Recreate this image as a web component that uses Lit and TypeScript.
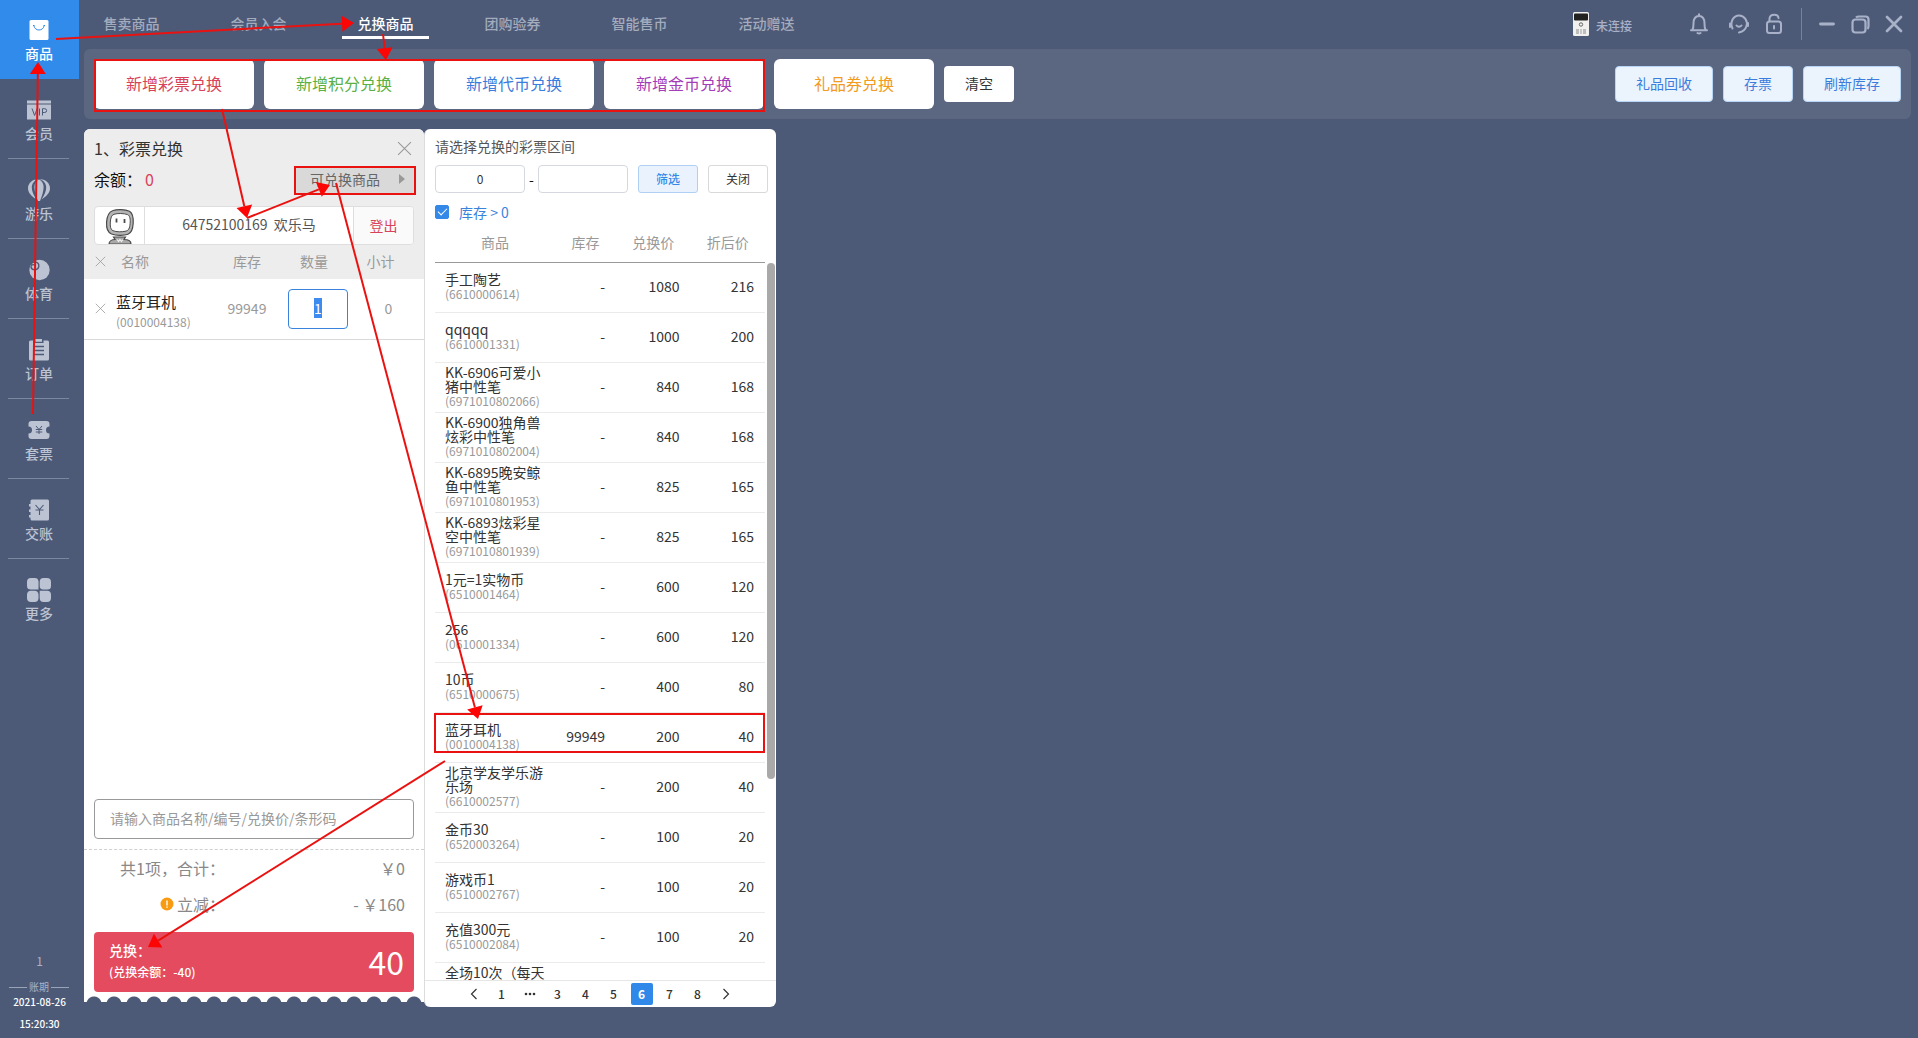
import { LitElement, html, svg, css, nothing } from "lit";
import { customElement, query, state } from "lit/decorators.js";
import { classMap } from "lit/directives/class-map.js";

interface NavItem {
  label: string;
  icon: unknown;
}

interface Product {
  name: string;
  code: string;
  stock: string;
  price: number;
  discounted: number;
}

type Point = [number, number];

const navItems: NavItem[] = [
  {
    label: "商品",
    icon: svg`<rect x="2.5" y="2" width="19" height="20" rx="1.5" fill="currentColor"/>
      <path d="M6 7.500h1.500M16.500 7.500H18M6.800 7.500c1 6 9.400 6 10.400 0" fill="none" stroke="#318bea" stroke-width="1"/>`,
  },
  {
    label: "会员",
    icon: svg`<rect x="0" y="2.500" width="24" height="3" fill="currentColor"/>
      <rect x="0" y="6.500" width="24" height="15" fill="currentColor"/>
      <path d="M5 10.500l2.600 7 2.600-7M12.500 10.500v7M15.500 17.500v-6.800h2.200a1.900 1.900 0 0 1 0 3.800h-2.200" fill="none" stroke="#4c5a78" stroke-width="1"/>`,
  },
  {
    label: "游乐",
    icon: svg`<path d="M12 1C5.500 1 1 5.200 1 10.200c0 4.500 3.500 8 8.500 11.300C6.500 17 4.800 13 4.800 9.500 4.800 5.500 7.500 2 12 1z" fill="currentColor"/>
      <path d="M12 1c6.500 0 11 4.200 11 9.200 0 4.500-3.500 8-8.500 11.300 3-4.500 4.700-8.500 4.700-12C19.200 5.500 16.500 2 12 1z" fill="currentColor"/>
      <path d="M12 1.500c-3.300 1.500-4.600 4.300-4.600 7.800 0 4 1.600 8.500 3.600 13.700h2c2-5.200 3.600-9.700 3.600-13.700C16.600 5.800 15.300 3 12 1.500z" fill="currentColor"/>`,
  },
  {
    label: "体育",
    icon: svg`<circle cx="12.500" cy="12" r="10.200" fill="currentColor"/>
      <path d="M3.500 6.500c3-4.500 8.800-2.500 8.300 2-.5 4-6.800 4.500-7.800.5-.3-2 2.500-3.300 3.800-1.500" fill="none" stroke="#4c5a78" stroke-width="1.400"/>`,
  },
  {
    label: "订单",
    icon: svg`<path d="M3.500 2.500H7V5h9.500V2.500h4a1.500 1.500 0 0 1 1.500 1.500v17a1.500 1.500 0 0 1-1.500 1.500h-17A1.500 1.500 0 0 1 2 21V4a1.500 1.500 0 0 1 1.500-1.500z" fill="currentColor"/>
      <path d="M8.500 1h6.500v2.800H8.500z" fill="currentColor"/>
      <path d="M7 8.500h10M7 12.500h10M7 16.500h10" stroke="#4c5a78" stroke-width="1.300"/>`,
  },
  {
    label: "套票",
    icon: svg`<path d="M4 3h15.500a3 3 0 0 1 3 3v2.500a3.500 3.500 0 0 0 0 7V18a3 3 0 0 1-3 3H4.500a3 3 0 0 1-3-3v-2.500a3.500 3.500 0 0 0 0-7V6a3 3 0 0 1 3-3z" fill="currentColor"/>
      <path d="M9 8l3 3.500L15 8M12 11.500V16M8.800 11.500h6.400M8.800 14h6.400" fill="none" stroke="#4c5a78" stroke-width="1"/>`,
  },
  {
    label: "交账",
    icon: svg`<path d="M5 1.500h15.500A1.500 1.500 0 0 1 22 3v18a1.500 1.500 0 0 1-1.500 1.500H5A1.500 1.500 0 0 1 3.500 21v-1.500H2V17h1.500v-3H2v-2.500h1.500V8.500H2V6h1.500V3A1.500 1.500 0 0 1 5 1.500z" fill="currentColor"/>
      <path d="M8.500 7l4 4.500L16.500 7M12.500 11.500V17M8.500 12h8" fill="none" stroke="#4c5a78" stroke-width="1.100"/>`,
  },
  {
    label: "更多",
    icon: svg`<path d="M4 0h4a4 4 0 0 1 4 3.500V12H4a4 4 0 0 1-4-4V4a4 4 0 0 1 4-4z" fill="currentColor" transform="scale(.96)"/>
      <path d="M16.500 0H20a4 4 0 0 1 4 4v4a3.500 3.500 0 0 1-3.500 3.500H16A3.500 3.500 0 0 1 12.700 8V4A4 4 0 0 1 16.500 0z" fill="currentColor"/>
      <path d="M4 12.700h3.500A4 4 0 0 1 11.500 16.500V20a4 4 0 0 1-4 4H4a4 4 0 0 1-4-4v-3.500a4 4 0 0 1 4-3.800z" fill="currentColor"/>
      <path d="M12.700 12.700H20a4 4 0 0 1 4 4V20a4 4 0 0 1-4 4h-3.500a4 4 0 0 1-3.800-4z" fill="currentColor"/>`,
  },
];

const tabs = ["售卖商品", "会员入会", "兑换商品", "团购验券", "智能售币", "活动赠送"];

const exchangeKinds = [
  { label: "新增彩票兑换", tone: "red" },
  { label: "新增积分兑换", tone: "green" },
  { label: "新增代币兑换", tone: "blue" },
  { label: "新增金币兑换", tone: "purple" },
  { label: "礼品券兑换", tone: "orange" },
];

const products: Product[] = [
  { name: "手工陶艺", code: "6610000614", stock: "-", price: 1080, discounted: 216 },
  { name: "qqqqq", code: "6610001331", stock: "-", price: 1000, discounted: 200 },
  { name: "KK-6906可爱小猪中性笔", code: "6971010802066", stock: "-", price: 840, discounted: 168 },
  { name: "KK-6900独角兽炫彩中性笔", code: "6971010802004", stock: "-", price: 840, discounted: 168 },
  { name: "KK-6895晚安鲸鱼中性笔", code: "6971010801953", stock: "-", price: 825, discounted: 165 },
  { name: "KK-6893炫彩星空中性笔", code: "6971010801939", stock: "-", price: 825, discounted: 165 },
  { name: "1元=1实物币", code: "6510001464", stock: "-", price: 600, discounted: 120 },
  { name: "256", code: "0610001334", stock: "-", price: 600, discounted: 120 },
  { name: "10币", code: "6510000675", stock: "-", price: 400, discounted: 80 },
  { name: "蓝牙耳机", code: "0010004138", stock: "99949", price: 200, discounted: 40 },
  { name: "北京学友学乐游乐场", code: "6610002577", stock: "-", price: 200, discounted: 40 },
  { name: "金币30", code: "6520003264", stock: "-", price: 100, discounted: 20 },
  { name: "游戏币1", code: "6510002767", stock: "-", price: 100, discounted: 20 },
  { name: "充值300元", code: "6510002084", stock: "-", price: 100, discounted: 20 },
];

const arrows: [Point, Point][] = [
  [[33, 414], [38, 62]],
  [[56, 39], [354, 23]],
  [[383, 34], [386, 60]],
  [[222, 109], [247, 218]],
  [[247, 218], [330, 185]],
  [[336, 183], [478, 719]],
  [[445, 761], [148, 947]],
];

const frames = [
  { x: 95, y: 60, w: 669, h: 51 },
  { x: 295, y: 167, w: 120, h: 27 },
  { x: 435, y: 714, w: 329, h: 38 },
];

/** Tutorial overlay: outlines and arrows that walk through the exchange flow. */
@customElement("guide-overlay")
export class GuideOverlay extends LitElement {
  static styles = css`
    :host {
      position: absolute;
      inset: 0;
      overflow: hidden;
      pointer-events: none;
    }
    .canvas {
      display: block;
      width: 100%;
      height: 100%;
    }
    .frame,
    .shaft {
      fill: none;
      stroke: #ea1210;
      stroke-width: 2;
    }
    .head {
      fill: #fb0505;
    }
  `;

  private arrow([[x1, y1], [x2, y2]]: [Point, Point]) {
    const length = Math.hypot(x2 - x1, y2 - y1);
    const ux = (x2 - x1) / length;
    const uy = (y2 - y1) / length;
    const bx = x2 - ux * 12;
    const by = y2 - uy * 12;
    const points = `${x2},${y2} ${bx - uy * 8},${by + ux * 8} ${bx + uy * 8},${by - ux * 8}`;
    return svg`<line class="shaft" x1=${x1} y1=${y1} x2=${bx} y2=${by}/><polygon class="head" points=${points}/>`;
  }

  render() {
    return html`<svg class="canvas" aria-hidden="true">
      ${frames.map((f) => svg`<rect class="frame" x=${f.x} y=${f.y} width=${f.w} height=${f.h}/>`)}
      ${arrows.map((a) => this.arrow(a))}
    </svg>`;
  }
}

@customElement("app-root")
export class AppRoot extends LitElement {
  static styles = css`
    :host {
      display: block;
      position: relative;
      font-family: "Noto Sans CJK SC", "Noto Sans", sans-serif;
      font-size: 14px;
      color: #333;
      background: #4c5a78;
    }
    * {
      box-sizing: border-box;
    }
    button,
    input {
      font: inherit;
      color: inherit;
      margin: 0;
      padding: 0 0 2px;
      border: 0;
      background: none;
      outline: none;
    }
    ul {
      list-style: none;
      margin: 0;
      padding: 0;
    }
    svg {
      display: block;
      flex: none;
    }

    .app {
      display: flex;
      height: 100vh;
      min-height: 700px;
    }

    /* sidebar */
    .sidebar {
      display: flex;
      flex-direction: column;
      justify-content: space-between;
      flex: none;
      width: 79px;
    }
    .nav-item {
      display: flex;
      flex-direction: column;
      height: 80px;
    }
    .nav-item::after {
      content: "";
      height: 1px;
      margin: 0 10px 1px 8px;
      background: #7c88a0;
    }
    .nav-item.active::after,
    .nav-item:last-child::after {
      background: none;
      margin-bottom: 0;
    }
    .nav-button {
      display: flex;
      flex-direction: column;
      align-items: center;
      gap: 1px;
      flex: 1;
      padding: 18px 1px 0 0;
      font-weight: 500;
      line-height: 20px;
      color: #bcc3d2;
    }
    .active .nav-button {
      background: #318bea;
      color: #fff;
    }
    .shift {
      display: flex;
      flex-direction: column;
      align-items: stretch;
      padding-bottom: 6px;
      text-align: center;
      font-size: 10px;
      line-height: 16px;
    }
    .shift-number {
      margin-bottom: 10px;
      font-size: 12px;
      line-height: 18px;
      color: #aab3c5;
    }
    .shift-label {
      display: flex;
      align-items: center;
      gap: 2px;
      padding: 0 10px 0 9px;
      line-height: 14px;
      color: #aab3c5;
    }
    .shift-label::before,
    .shift-label::after {
      content: "";
      flex: 1;
      height: 1px;
      background: #9aa4b8;
    }
    .clock {
      color: #fff;
      font-weight: 500;
    }
    .clock + .clock {
      margin-top: 6px;
    }

    /* main column */
    .main {
      display: flex;
      flex-direction: column;
      flex: 1;
      min-width: 0;
      padding: 0 7px 31px 5px;
    }
    .topbar {
      display: flex;
      justify-content: space-between;
      height: 49px;
      flex: none;
      padding: 0 8px 0 4px;
    }
    .tabs {
      display: flex;
      gap: 40px;
      height: 39px;
    }
    .tab {
      width: 87px;
      padding-top: 7px;
      border-bottom: 3px solid transparent;
      color: #a3abbd;
      font-weight: 500;
      text-align: center;
      text-decoration: none;
      line-height: 32px;
    }
    .tab.active {
      color: #fff;
      border-color: #fff;
    }
    .status {
      display: flex;
      align-items: center;
      height: 48px;
      color: #a9b1c8;
    }
    .device {
      display: flex;
      align-items: center;
      gap: 7px;
      margin-right: 57px;
      font-size: 12px;
      font-weight: 500;
    }
    .device-state {
      padding-top: 3px;
    }
    .tools {
      display: flex;
      align-items: center;
      gap: 16px;
    }
    .tools.window {
      gap: 15px;
      height: 32px;
      margin-left: 18px;
      padding-left: 16px;
      border-left: 1px solid #78839b;
    }
    .icon-button {
      display: block;
      padding: 0;
      line-height: 0;
    }

    .toolbar {
      display: flex;
      align-items: center;
      gap: 10px;
      flex: none;
      height: 70px;
      padding: 0 10px;
      border-radius: 6px;
      background: #5b6780;
    }
    .kind {
      width: 160px;
      height: 50px;
      border-radius: 6px;
      background: #fff;
      font-size: 16px;
    }
    .red { color: #d8435a; }
    .green { color: #5cb043; }
    .blue { color: #3b7ddc; }
    .purple { color: #a53cb8; }
    .orange { color: #f29b1d; }
    .clear {
      width: 70px;
      height: 36px;
      border-radius: 4px;
      background: #fff;
    }
    .spacer {
      flex: 1;
    }
    .secondary {
      height: 36px;
      padding: 0 20px 2px;
      border: 1px solid #b9d5f6;
      border-radius: 4px;
      background: #ebf3fd;
      color: #3b7ddc;
    }

    .workspace {
      display: flex;
      flex: 1;
      min-height: 0;
      padding-top: 10px;
    }

    /* cart */
    .cart {
      display: flex;
      flex-direction: column;
      flex: none;
      width: 340px;
      margin-bottom: 5px;
      border-radius: 6px 6px 0 0;
      background: #fff;
    }
    .cart-head {
      flex: none;
      border-radius: 6px 6px 0 0;
      background: #ededed;
    }
    .title-row,
    .balance-row {
      display: flex;
      align-items: center;
      justify-content: space-between;
      font-size: 16px;
    }
    .title-row {
      height: 38px;
      padding: 0 12px 0 10px;
    }
    .title {
      margin: 0;
      font-size: 16px;
      font-weight: 400;
    }
    .balance-row {
      height: 26px;
      padding: 0 8px 0 10px;
      color: #111;
    }
    .balance-text {
      padding-bottom: 2px;
    }
    .balance {
      margin-left: 3px;
      color: #d8435a;
    }
    .available {
      display: flex;
      align-items: center;
      justify-content: space-between;
      width: 122px;
      height: 28px;
      padding: 0 11px 2px 16px;
      background: #d9d9d9;
      font-size: 14px;
      color: #666;
    }
    .member {
      display: flex;
      height: 39px;
      margin: 13px 10px 0;
      border: 1px solid #dedede;
      border-radius: 4px;
      background: #fff;
      overflow: hidden;
    }
    .avatar {
      display: flex;
      align-items: flex-end;
      justify-content: center;
      width: 50px;
      border-right: 1px solid #dedede;
    }
    .member-name {
      flex: 1;
      text-align: center;
      line-height: 35px;
      color: #555;
      white-space: pre;
    }
    .logout {
      width: 60px;
      border-left: 1px solid #dedede;
      background: #fafafa;
      color: #d8435a;
    }
    .cart-table,
    .product-table {
      width: 100%;
      table-layout: fixed;
      border-spacing: 0;
    }
    .cart-table th,
    .cart-table td {
      padding: 0 0 2px;
      text-align: center;
      font-weight: 400;
      color: #999;
    }
    .cart-table th {
      height: 34px;
      background: #ededed;
    }
    .cart-table td {
      height: 61px;
      border-bottom: 1px solid #d9d9d9;
    }
    .cart-table td.col-name {
      padding: 6px 0 0;
      text-align: left;
    }
    .cart-table th.col-name {
      padding-left: 5px;
      text-align: left;
    }
    .cart-table th.col-qty {
      padding-right: 8px;
    }
    .cart-table td.col-qty {
      padding: 0;
    }
    .cart-table th.col-sum {
      padding-right: 20px;
    }
    .cart-table td.col-sum {
      padding-right: 4px;
    }
    .c-remove { width: 32px; }
    .c-name { width: 99px; }
    .c-stock { width: 64px; }
    .c-qty { width: 78px; }
    .remove {
      padding: 4px 0 4px 11px;
      display: block;
    }
    .item-name {
      color: #222;
      font-size: 15px;
      line-height: 20px;
    }
    .item-code {
      font-size: 12px;
      line-height: 20px;
      color: #999;
    }
    .qty {
      width: 60px;
      height: 40px;
      border: 1px solid #3a83dc;
      border-radius: 4px;
      text-align: center;
      color: #333;
      line-height: 14px;
      vertical-align: middle;
    }
    .qty::selection {
      background: #3d8bee;
      color: #fff;
    }
    .cart-space {
      flex: 1;
    }
    .search {
      flex: none;
      height: 40px;
      margin: 0 10px 10px;
      padding: 0 15px 2px;
      border: 1px solid #999;
      border-radius: 4px;
    }
    .search::placeholder {
      color: #999;
      opacity: 1;
    }
    .totals {
      padding: 0 19px 10px 0;
      border-top: 1px dashed #d0d0d0;
      font-size: 16px;
      line-height: 36px;
      color: #888;
    }
    .total {
      display: flex;
      justify-content: space-between;
    }
    .total-label {
      display: flex;
      align-items: center;
      justify-content: flex-end;
      gap: 3px;
      width: 141px;
    }
    .submit {
      display: flex;
      align-items: center;
      justify-content: space-between;
      flex: none;
      height: 60px;
      margin: 0 10px;
      padding: 0 10px 2px 15px;
      border-radius: 4px;
      background: #e44b5e;
      color: #fff;
      font-weight: 500;
      text-align: left;
    }
    .submit-title {
      display: block;
      line-height: 22px;
    }
    .submit-note {
      display: block;
      font-size: 12px;
      line-height: 22px;
    }
    .submit-amount {
      font-size: 32px;
      font-weight: 400;
    }
    .scallop {
      flex: none;
      height: 10px;
      background: radial-gradient(circle at 10px 12px, #4c5a78 7px, transparent 8px) 0 0 / 20px 10px;
    }

    /* product picker */
    .picker {
      display: flex;
      flex-direction: column;
      flex: none;
      width: 352px;
      border-left: 1px solid #dcdcdc;
      border-radius: 6px;
      background: #fff;
    }
    .picker-title {
      margin: 0;
      padding: 0 10px 2px;
      font-size: 14px;
      font-weight: 400;
      line-height: 34px;
      color: #555;
    }
    .range {
      display: flex;
      align-items: center;
      justify-content: space-between;
      padding: 0 8px 0 10px;
      font-size: 12px;
    }
    .range-inputs {
      display: flex;
      align-items: center;
      gap: 4px;
    }
    .range-input {
      width: 90px;
      height: 28px;
      border: 1px solid #d5d8de;
      border-radius: 4px;
      text-align: center;
    }
    .dash {
      font-size: 14px;
      color: #111;
    }
    .small {
      width: 60px;
      height: 28px;
      border: 1px solid #d9d9d9;
      border-radius: 3px;
    }
    .small.primary {
      border-color: #b0d0f3;
      background: #eaf3fd;
      color: #3488e8;
      font-weight: 500;
    }
    .stock-filter {
      display: flex;
      align-items: center;
      gap: 10px;
      height: 22px;
      margin: 8px 10px 0;
      color: #3a83dc;
    }
    .check {
      appearance: none;
      display: grid;
      place-items: center;
      width: 14px;
      height: 14px;
      padding: 0;
      border: 1px solid #3488e8;
      border-radius: 2px;
    }
    .check:checked {
      background: #3488e8;
    }
    .check:checked::after {
      content: "";
      width: 8px;
      height: 4px;
      margin-bottom: 3px;
      border: solid #fff;
      border-width: 0 0 1px 1px;
      transform: rotate(-45deg);
    }
    .list {
      display: flex;
      flex: 1;
      min-height: 0;
      padding: 0 1px 0 10px;
      border-bottom: 1px solid #e6e6e6;
    }
    .list-body {
      flex: 1;
      overflow: hidden;
    }
    .track {
      width: 8px;
      margin: 40px 0 0 2px;
    }
    .thumb {
      border-radius: 4px;
      background: #a9a9a9;
    }
    .product-table th {
      height: 40px;
      padding: 0 0 2px;
      border-bottom: 1px solid #999;
      font-weight: 400;
      color: #999;
    }
    .product-table td {
      height: 50px;
      padding: 0 11px 3px 0;
      border-bottom: 1px solid #ebebeb;
      text-align: right;
    }
    .product-table .p-name {
      padding: 0 10px 2px;
      text-align: left;
      line-height: 14px;
      word-break: break-all;
    }
    .product-table .p-partial {
      padding-top: 2px;
      vertical-align: top;
    }
    .p-code {
      display: block;
      font-size: 12px;
      line-height: 15px;
      color: #999;
    }
    .w-name { width: 120px; }
    .w-stock { width: 61px; }
    .pager {
      display: flex;
      align-items: center;
      justify-content: center;
      gap: 6px;
      flex: none;
      height: 26px;
      padding-right: 2px;
      font-size: 12px;
      font-weight: 500;
    }
    .page {
      display: grid;
      place-items: center;
      width: 22px;
      height: 22px;
      padding: 0;
      border-radius: 2px;
      line-height: 22px;
    }
    .page.current {
      background: #3088e8;
      color: #fff;
      font-weight: 700;
    }
  `;

  @state() private activeTab = 2;
  @state() private page = 6;
  @query(".qty") private qty!: HTMLInputElement;

  firstUpdated() {
    this.qty.focus();
    this.qty.select();
  }

  private cross(size: number, color: string, width = 1) {
    return html`<svg width=${size} height=${size} viewBox="0 0 14 14" fill="none" stroke=${color} stroke-width=${width}>
      <path d="M1 1l12 12M13 1L1 13" />
    </svg>`;
  }

  private renderSidebar() {
    return html`<aside class="sidebar">
      <ul>
        ${navItems.map(
          (item, i) => html`<li class=${classMap({ "nav-item": true, active: i === 0 })}>
            <button class="nav-button" type="button">
              <svg width="24" height="24" viewBox="0 0 24 24">${item.icon}</svg>
              ${item.label}
            </button>
          </li>`
        )}
      </ul>
      <div class="shift">
        <div class="shift-number">1</div>
        <div class="shift-label">账期</div>
        <time class="clock">2021-08-26</time>
        <time class="clock">15:20:30</time>
      </div>
    </aside>`;
  }

  private renderTopbar() {
    return html`<header class="topbar">
      <nav class="tabs">
        ${tabs.map(
          (label, i) => html`<a
            href="#"
            class=${classMap({ tab: true, active: i === this.activeTab })}
            @click=${(e: Event) => {
              e.preventDefault();
              this.activeTab = i;
            }}
            >${label}</a
          >`
        )}
      </nav>
      <div class="status">
        <div class="device">
          <svg width="16" height="24" viewBox="0 0 16 24">
            <rect width="16" height="24" rx="1.500" fill="#f1f1ef" />
            <rect x="1" y="1.500" width="14" height="7" rx="1" fill="#222" />
            <circle cx="8" cy="12.500" r="1.700" fill="none" stroke="#666" />
            <rect x="3" y="17" width="3" height="5" fill="#bdbdbd" />
            <rect x="7" y="17" width="2" height="5" fill="#c9c9c9" />
            <rect x="10" y="17" width="3" height="5" fill="#bdbdbd" />
          </svg>
          <span class="device-state">未连接</span>
        </div>
        <div class="tools">
          <button class="icon-button" type="button" aria-label="通知">
            <svg width="20" height="22" viewBox="0 0 20 22" fill="none" stroke="currentColor" stroke-width="2" stroke-linejoin="round" stroke-linecap="round">
              <path d="M10 1.300v1.300M2 17.300h16M3.500 16.500c1-1.500 1-3 1-6 0-4.500 2-7.500 5.500-7.500s5.500 3 5.500 7.500c0 3 0 4.500 1 6M8.500 20c.8.600 2.200.6 3 0" />
            </svg>
          </button>
          <button class="icon-button" type="button" aria-label="客服">
            <svg width="24" height="22" viewBox="-3 0 24 22" fill="none" stroke="currentColor" stroke-width="2" stroke-linecap="round">
              <path d="M4.500 15.500C1.500 9 5.500 2.500 11 2.500S20 8 18.500 13c-1 3.500-3 5.500-7.500 6.500M2 10.500v3.500M20 10v3M8.500 12.500c1.200 1.500 3.800 1.500 5 0" />
            </svg>
          </button>
          <button class="icon-button" type="button" aria-label="锁屏">
            <svg width="18" height="22" viewBox="0 0 18 22" fill="none" stroke="currentColor" stroke-width="2" stroke-linecap="round">
              <rect x="2" y="8.500" width="14" height="11.500" rx="2.500" />
              <path d="M4.500 8V5.500C5 .5 13 .5 13.500 5M9 13v2.500" />
            </svg>
          </button>
        </div>
        <div class="tools window">
          <button class="icon-button" type="button" aria-label="最小化">
            <svg width="18" height="18" viewBox="0 0 18 18" stroke="currentColor" stroke-width="2.800" stroke-linecap="round">
              <path d="M2.500 9h13" />
            </svg>
          </button>
          <button class="icon-button" type="button" aria-label="还原">
            <svg width="19" height="19" viewBox="0 0 19 19" fill="none" stroke="currentColor" stroke-width="2.200">
              <rect x="1.500" y="4.500" width="13" height="13" rx="3" />
              <path d="M5 2.500C6 1.500 7 1.500 8 1.500h6.500a3 3 0 0 1 3 3V11c0 1 0 2-1 3" />
            </svg>
          </button>
          <button class="icon-button" type="button" aria-label="关闭">
            <svg width="18" height="18" viewBox="0 0 18 18" stroke="currentColor" stroke-width="2.700" stroke-linecap="round">
              <path d="M2 2l14 14M16 2L2 16" />
            </svg>
          </button>
        </div>
      </div>
    </header>`;
  }

  private renderToolbar() {
    return html`<div class="toolbar">
      ${exchangeKinds.map((k) => html`<button type="button" class="kind ${k.tone}">${k.label}</button>`)}
      <button type="button" class="clear">清空</button>
      <span class="spacer"></span>
      ${["礼品回收", "存票", "刷新库存"].map(
        (label) => html`<button type="button" class="secondary">${label}</button>`
      )}
    </div>`;
  }

  private renderCart() {
    return html`<section class="cart">
      <div class="cart-head">
        <div class="title-row">
          <h2 class="title">1、彩票兑换</h2>
          <button class="icon-button" type="button" aria-label="关闭">${this.cross(15, "#999")}</button>
        </div>
        <div class="balance-row">
          <span class="balance-text">余额：<span class="balance">0</span></span>
          <button class="available" type="button">
            可兑换商品
            <svg width="6" height="10" viewBox="0 0 6 10"><path d="M0 0l6 5-6 5z" fill="#999" /></svg>
          </button>
        </div>
        <div class="member">
          <div class="avatar">
            <svg width="30" height="36" viewBox="0 0 30 36" stroke="#4a4a4a" stroke-width="1.200">
              <path d="M4 36c0-3 3-4.500 6-4.500l-1.500-2.500h12L19 31.500c4 0 7 1.500 7 4.500z" fill="#a9a9a9" />
              <path d="M7.500 2.800C12 1 20 1.200 24.500 3.300c3.200 2 4 6.500 3.700 12-.4 6.500-2 9.800-5.200 11-4 1.400-12 1.400-16.500-.3C2.500 24.300 1.200 20 1.600 14c.5-6 2.400-9.900 5.900-11.200z" fill="#b4b4b4" />
              <path d="M9 6.300c3.500-1.200 10-1 13.500.3 2.500 1 3 4.500 2.600 9-.4 5-1.600 6.800-4.100 7.500-4 1-9.500 1-13-.4-2.500-1-3-4.500-2.700-8.700.4-4.200 1.200-7 3.700-7.700z" fill="#fff" stroke-width="1" />
              <path d="M11.500 10.500v4M19.500 11v4" stroke-width="1.800" />
              <path d="M12 31.500l1.500 2 1.500-2 1.500 2 1.500-2" fill="none" stroke="#eee" />
            </svg>
          </div>
          <div class="member-name">64752100169  欢乐马</div>
          <button class="logout" type="button">登出</button>
        </div>
      </div>
      <table class="cart-table">
        <colgroup>
          <col class="c-remove" />
          <col class="c-name" />
          <col class="c-stock" />
          <col class="c-qty" />
          <col />
        </colgroup>
        <thead>
          <tr>
            <th><button class="remove" type="button" aria-label="全部移除">${this.cross(11, "#999")}</button></th>
            <th class="col-name">名称</th>
            <th>库存</th>
            <th class="col-qty">数量</th>
            <th class="col-sum">小计</th>
          </tr>
        </thead>
        <tbody>
          <tr>
            <td><button class="remove" type="button" aria-label="移除">${this.cross(11, "#999")}</button></td>
            <td class="col-name">
              <div class="item-name">蓝牙耳机</div>
              <div class="item-code">(0010004138)</div>
            </td>
            <td>99949</td>
            <td class="col-qty"><input class="qty" type="text" aria-label="数量" .value=${"1"} /></td>
            <td class="col-sum">0</td>
          </tr>
        </tbody>
      </table>
      <div class="cart-space"></div>
      <input class="search" type="text" aria-label="搜索商品" placeholder="请输入商品名称/编号/兑换价/条形码" />
      <div class="totals">
        <div class="total"><span class="total-label">共1项，合计：</span><span>￥0</span></div>
        <div class="total">
          <span class="total-label">
            <svg width="14" height="14" viewBox="0 0 14 14">
              <circle cx="7" cy="7" r="6.500" fill="#f79c12" />
              <path d="M7 3.500v5M7 9.500v1.300" stroke="#ffe9c4" stroke-width="1.800" />
            </svg>
            立减：
          </span>
          <span>- ￥160</span>
        </div>
      </div>
      <button class="submit" type="button">
        <span>
          <span class="submit-title">兑换：</span>
          <span class="submit-note">(兑换余额：-40)</span>
        </span>
        <span class="submit-amount">40</span>
      </button>
      <div class="scallop"></div>
    </section>`;
  }

  private renderRow(p: Product) {
    return html`<tr>
      <td class="p-name">${p.name}<span class="p-code">(${p.code})</span></td>
      <td>${p.stock}</td>
      <td>${p.price}</td>
      <td>${p.discounted}</td>
    </tr>`;
  }

  private renderPicker() {
    return html`<section class="picker">
      <h2 class="picker-title">请选择兑换的彩票区间</h2>
      <div class="range">
        <div class="range-inputs">
          <input class="range-input" type="text" aria-label="最低价" .value=${"0"} />
          <span class="dash">-</span>
          <input class="range-input" type="text" aria-label="最高价" />
        </div>
        <button class="small primary" type="button">筛选</button>
        <button class="small" type="button">关闭</button>
      </div>
      <label class="stock-filter"><input class="check" type="checkbox" checked />库存 > 0</label>
      <div class="list">
        <div class="list-body">
          <table class="product-table">
            <colgroup>
              <col class="w-name" />
              <col class="w-stock" />
              <col />
              <col />
            </colgroup>
            <thead>
              <tr>
                <th>商品</th>
                <th>库存</th>
                <th>兑换价</th>
                <th>折后价</th>
              </tr>
            </thead>
            <tbody>
              ${products.map((p) => this.renderRow(p))}
              <tr>
                <td class="p-name p-partial">全场10次（每天</td>
                <td></td>
                <td></td>
                <td></td>
              </tr>
            </tbody>
          </table>
        </div>
        <div class="track"><div class="thumb" style="height: 72%"></div></div>
      </div>
      <nav class="pager" aria-label="分页">
        <button class="page" type="button" aria-label="上一页">
          <svg width="8" height="12" viewBox="0 0 8 12" fill="none" stroke="#333" stroke-width="1.200"><path d="M6.500 1L1.500 6l5 5" /></svg>
        </button>
        ${[1, 0, 3, 4, 5, 6, 7, 8].map((n) =>
          n === 0
            ? html`<span class="page"
                ><svg width="12" height="4" viewBox="0 0 12 4" fill="#333">
                  <circle cx="2" cy="2" r="1.300" />
                  <circle cx="6" cy="2" r="1.300" />
                  <circle cx="10" cy="2" r="1.300" /></svg
              ></span>`
            : html`<button
                type="button"
                class=${classMap({ page: true, current: n === this.page })}
                aria-current=${n === this.page ? "page" : nothing}
                @click=${() => (this.page = n)}
              >
                ${n}
              </button>`
        )}
        <button class="page" type="button" aria-label="下一页">
          <svg width="8" height="12" viewBox="0 0 8 12" fill="none" stroke="#333" stroke-width="1.200"><path d="M1.500 1l5 5-5 5" /></svg>
        </button>
      </nav>
    </section>`;
  }

  render() {
    return html`<div class="app">
        ${this.renderSidebar()}
        <main class="main">
          ${this.renderTopbar()} ${this.renderToolbar()}
          <div class="workspace">${this.renderCart()} ${this.renderPicker()}</div>
        </main>
      </div>
      <guide-overlay></guide-overlay>`;
  }
}
